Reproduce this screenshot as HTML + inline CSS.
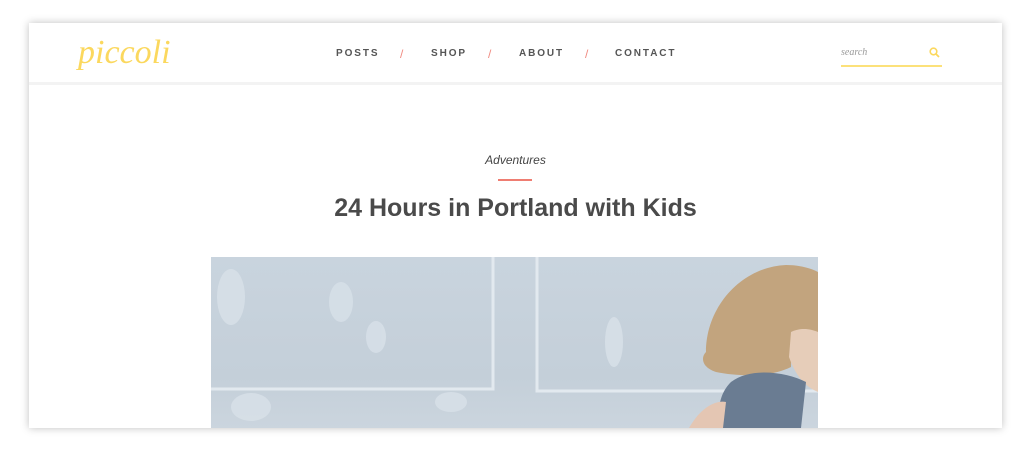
<!DOCTYPE html>
<html><head><meta charset="utf-8"><style>
*{margin:0;padding:0;box-sizing:border-box}
body{width:1031px;height:451px;background:#fff;overflow:hidden;position:relative;font-family:"Liberation Sans",sans-serif}
.card{position:absolute;left:29px;top:23px;width:973px;height:405px;background:#fff;box-shadow:0 0 8px rgba(0,0,0,.25);overflow:hidden}
.hdr{position:absolute;left:0;top:0;width:973px;height:62px;border-bottom:3px solid #f3f3f3}
.logo{position:absolute;left:49px;top:11px;font-family:"Liberation Serif",serif;font-style:italic;font-size:34px;color:#fbd85e}
.nav{position:absolute;top:25px;font-size:10px;font-weight:bold;letter-spacing:1.9px;color:#555}
.sl{position:absolute;top:24px;font-size:12px;color:#f08a80}
.search{position:absolute;left:812px;top:24px;width:101px;height:20px;border-bottom:2px solid #fce17a;font-family:"Liberation Serif",serif;font-style:italic;font-size:10px;color:#999}
.cat{position:absolute;left:0;width:973px;top:130px;text-align:center;font-style:italic;font-size:12px;color:#444}
.rule{position:absolute;left:469px;top:156px;width:34px;height:2px;background:#ef7d72}
h1{position:absolute;left:0;width:973px;top:171px;text-align:center;font-size:25px;font-weight:bold;color:#4a4a4a}
.img{position:absolute;left:182px;top:234px;width:607px;height:171px;background:linear-gradient(180deg,#c9d4de,#c4cfd9 70%,#cbd5de);overflow:hidden}
</style></head><body>
<div class="card">
 <div class="hdr">
  <div class="logo">piccoli</div>
  <div class="nav" style="left:307px">POSTS</div>
  <div class="sl" style="left:371px">/</div>
  <div class="nav" style="left:402px">SHOP</div>
  <div class="sl" style="left:459px">/</div>
  <div class="nav" style="left:490px">ABOUT</div>
  <div class="sl" style="left:556px">/</div>
  <div class="nav" style="left:586px">CONTACT</div>
  <div class="search">search
   <svg style="position:absolute;right:2px;top:0" width="11" height="11" viewBox="0 0 11 11"><circle cx="4.5" cy="4.5" r="3.3" fill="none" stroke="#fbd85e" stroke-width="1.6"/><path d="M7 7l3 3" stroke="#fbd85e" stroke-width="1.8"/></svg>
  </div>
 </div>
 <div class="cat">Adventures</div>
 <div class="rule"></div>
 <h1>24 Hours in Portland with Kids</h1>
 <div class="img">
  <svg width="607" height="171" viewBox="0 0 607 171">
   <g fill="none" stroke="#e2e9ef" stroke-width="3">
    <rect x="-10" y="-10" width="292" height="142"/>
    <rect x="326" y="-10" width="300" height="144"/>
   </g>
   <g fill="#d8e1e9" opacity=".8">
    <ellipse cx="20" cy="40" rx="14" ry="28"/><ellipse cx="130" cy="45" rx="12" ry="20"/>
    <ellipse cx="165" cy="80" rx="10" ry="16"/><ellipse cx="40" cy="150" rx="20" ry="14"/>
    <ellipse cx="403" cy="85" rx="9" ry="25"/><ellipse cx="240" cy="145" rx="16" ry="10"/>
   </g>
   <path d="M495 95 C495 50 530 10 575 8 C595 8 607 15 607 15 L607 75 C590 75 580 90 580 110 C560 120 530 120 505 115 C490 110 490 100 495 95Z" fill="#c2a47e"/>
   <path d="M580 75 C590 70 600 72 607 75 L607 135 C595 130 585 120 578 100Z" fill="#e6cdb9"/>
   <path d="M520 125 C540 110 575 115 595 125 L590 171 L510 171 C505 150 510 135 520 125Z" fill="#6a7c92"/>
   <path d="M478 171 C490 150 505 143 515 145 L512 171Z" fill="#e4c6b3"/>
  </svg>
 </div>
</div>
</body></html>
